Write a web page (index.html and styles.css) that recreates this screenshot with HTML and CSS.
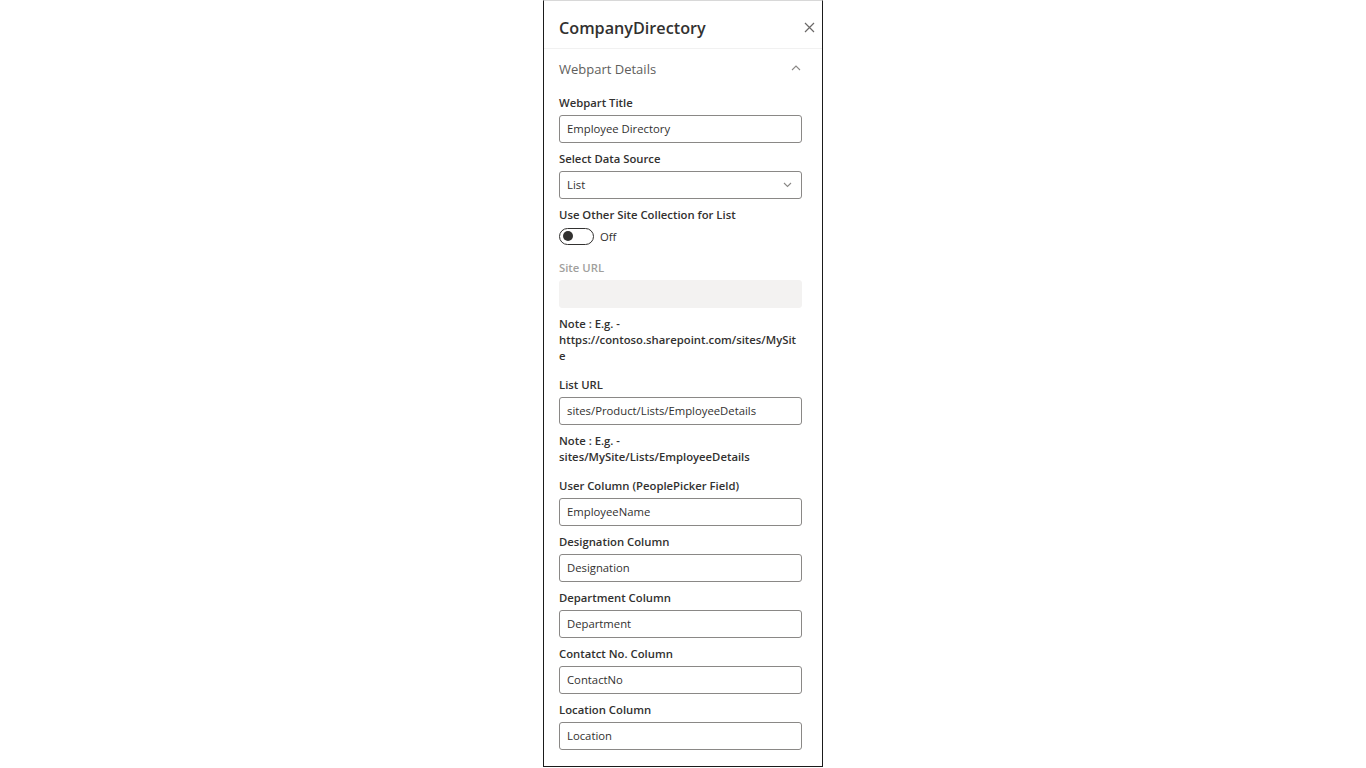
FILE: index.html
```html
<!DOCTYPE html>
<html lang="en">
<head>
<meta charset="utf-8">
<title>CompanyDirectory</title>
<link rel="stylesheet" href="styles.css">
</head>
<body>
<div class="stage">
  <aside class="panel">
    <header class="panel-header">
      <h1 class="panel-title">CompanyDirectory</h1>
      <button class="close" aria-label="Close">
        <svg width="11" height="11" viewBox="0 0 11 11"><path d="M1 1L10 10M10 1L1 10" stroke="#6b6968" stroke-width="1.2" fill="none"/></svg>
      </button>
    </header>
    <div class="group-head">
      <span>Webpart Details</span>
      <svg class="chev" width="10" height="6" viewBox="0 0 10 6"><path d="M1 5L5 1L9 5" stroke="#8a8886" stroke-width="1.1" fill="none"/></svg>
    </div>
    <div class="content">
      <div class="field">
        <label class="lbl">Webpart Title</label>
        <div class="input">Employee Directory</div>
      </div>
      <div class="field">
        <label class="lbl">Select Data Source</label>
        <div class="input select">List
          <svg width="9" height="6" viewBox="0 0 9 6"><path d="M1 1L4.5 4.5L8 1" stroke="#8a8886" stroke-width="1.1" fill="none"/></svg>
        </div>
      </div>
      <div class="field toggle-field">
        <label class="lbl">Use Other Site Collection for List</label>
        <div class="toggle-row">
          <span class="toggle"><span class="knob"></span></span>
          <span class="toggle-text">Off</span>
        </div>
      </div>
      <div class="field">
        <label class="lbl disabled">Site URL</label>
        <div class="input input-disabled"></div>
      </div>
      <p class="note">Note : E.g. -<br>https://contoso.sharepoint.com/sites/MySit<br>e</p>
      <div class="field">
        <label class="lbl">List URL</label>
        <div class="input">sites/Product/Lists/EmployeeDetails</div>
      </div>
      <p class="note">Note : E.g. -<br>sites/MySite/Lists/EmployeeDetails</p>
      <div class="field">
        <label class="lbl">User Column (PeoplePicker Field)</label>
        <div class="input">EmployeeName</div>
      </div>
      <div class="field">
        <label class="lbl">Designation Column</label>
        <div class="input">Designation</div>
      </div>
      <div class="field">
        <label class="lbl">Department Column</label>
        <div class="input">Department</div>
      </div>
      <div class="field">
        <label class="lbl">Contatct No. Column</label>
        <div class="input">ContactNo</div>
      </div>
      <div class="field">
        <label class="lbl">Location Column</label>
        <div class="input">Location</div>
      </div>
    </div>
  </aside>
</div>
</body>
</html>
```
FILE: styles.css
```css
html, body {
  margin: 0;
  padding: 0;
  background: #ffffff;
}
body {
  font-family: "Open Sans", "Noto Sans", sans-serif;
  color: #323130;
}
.stage {
  display: flex;
  justify-content: flex-start;
  padding-left: 543px;
  height: 768px;
  box-sizing: border-box;
}
.panel {
  width: 280px;
  height: 767px;
  box-sizing: border-box;
  border: 1px solid #1b1b1b;
  border-top-color: #d8d8d8;
  display: flex;
  flex-direction: column;
}
.panel-header {
  height: 47px;
  display: flex;
  align-items: center;
  justify-content: space-between;
  padding: 0 5px 0 15px;
  border-bottom: 1px solid #f1f1f1;
  box-sizing: content-box;
}
.panel-title {
  margin: 0;
  font-size: 16.2px;
  font-weight: 600;
  color: #323130;
  line-height: 24px;
  padding-top: 6px;
}
.close {
  border: 0;
  background: none;
  padding: 0;
  width: 16px;
  height: 16px;
  display: flex;
  align-items: center;
  justify-content: center;
  margin-top: 6px;
}
.group-head {
  height: 40px;
  display: flex;
  align-items: center;
  justify-content: space-between;
  padding: 0 21px 0 15px;
  font-size: 13px;
  color: #605e5c;
}
.chev {
  margin-top: -3px;
}
.content {
  padding: 6px 20px 0 15px;
  display: flex;
  flex-direction: column;
}
.field {
  display: flex;
  flex-direction: column;
  margin-bottom: 8px;
}
.lbl {
  font-size: 11.3px;
  font-weight: 600;
  line-height: 16px;
  margin-bottom: 4px;
  color: #323130;
  white-space: nowrap;
}
.lbl.disabled {
  color: #a19f9d;
}
.input {
  height: 28px;
  box-sizing: border-box;
  border: 1px solid #8a8886;
  border-radius: 3px;
  padding: 0 7px;
  font-size: 11.3px;
  line-height: 26px;
  color: #323130;
  display: flex;
  align-items: center;
  justify-content: space-between;
}
.select svg {
  margin-right: 2px;
}
.input-disabled {
  background: #f3f2f1;
  border-color: #f3f2f1;
}
.toggle-field .lbl {
  margin-bottom: 3px;
}
.toggle-row {
  display: flex;
  align-items: center;
  height: 20px;
  margin-bottom: 6px;
}
.toggle {
  width: 35px;
  height: 17px;
  box-sizing: border-box;
  border: 1px solid #323130;
  border-radius: 9px;
  display: flex;
  align-items: center;
  padding-left: 3px;
}
.knob {
  width: 10px;
  height: 10px;
  border-radius: 50%;
  background: #323130;
}
.toggle-text {
  font-size: 11.3px;
  margin-left: 6px;
  color: #323130;
}
.note {
  margin: 0 0 13px 0;
  font-size: 11.3px;
  font-weight: 600;
  line-height: 16px;
  color: #323130;
}
```
